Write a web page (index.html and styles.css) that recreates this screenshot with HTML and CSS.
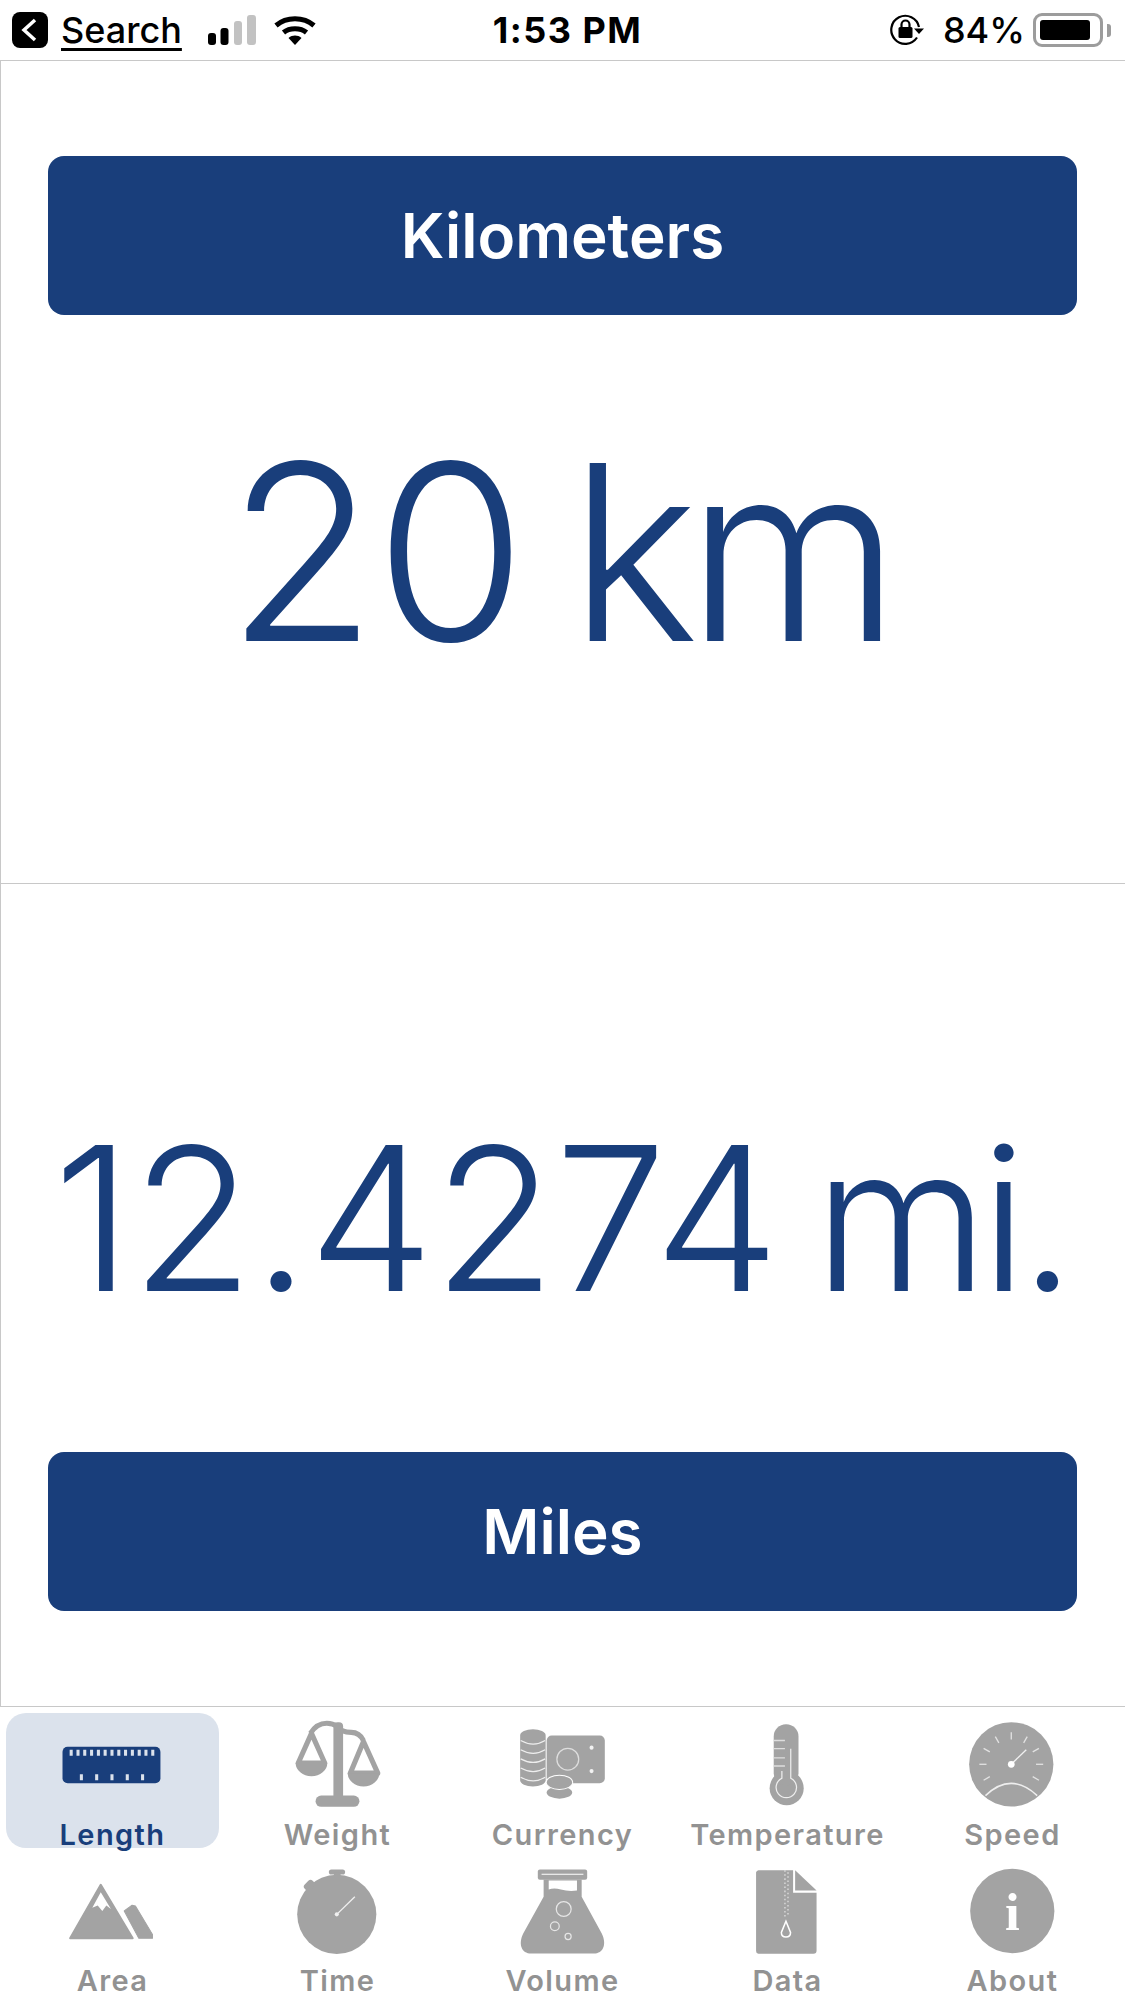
FILE: index.html
```html
<!DOCTYPE html>
<html lang="en">
<head>
    <meta charset="UTF-8">
    <meta name="viewport" content="width=device-width, initial-scale=1.0"/>
    <title>Length converter</title>
    <link rel="stylesheet" href="styles.css">
</head>
<body>
    <!--status bar-->
    <header class="status">
        <div class="status-left">
            <svg class="back" width="36" height="36" viewBox="0 0 36 36"><rect width="36" height="36" rx="8" fill="#000"/><path d="M23 8 12 18l11 10" fill="none" stroke="#fff" stroke-width="3.500"/></svg>
            <span class="search">Search</span>
            <svg class="signal" width="48" height="30" viewBox="0 0 48 30"><rect x="0" y="18" width="8" height="12" rx="3" fill="#000"/><rect x="12.500" y="13" width="8" height="17" rx="3" fill="#000"/><rect x="26" y="6" width="8" height="24" rx="3" fill="#c2c2c2"/><rect x="39" y="0" width="9" height="30" rx="3" fill="#c2c2c2"/></svg>
            <svg class="wifi" width="42" height="30" viewBox="0 0 42 30"><path d="M2 10.500C12.500 1.500 29.500 1.500 40 10.500" fill="none" stroke="#000" stroke-width="5"/><path d="M9.500 17.500C15.500 12.500 26.500 12.500 32.500 17.500" fill="none" stroke="#000" stroke-width="5"/><path d="M14.500 23 21 30l6.500-7C23.500 19.800 18.500 19.800 14.500 23z" fill="#000"/></svg>
        </div>
        <div class="clock">1:53 PM</div>
        <div class="status-right">
            <svg class="rotlock" width="34" height="32" viewBox="0 0 34 32"><path d="M27 23.500A14 14 0 1 1 29 13" fill="none" stroke="#000" stroke-width="2.200"/><path d="M24 14.500h10L29 20z" fill="#000"/><rect x="8.500" y="13" width="14" height="11" rx="1.500" fill="#000"/><path d="M11.500 13V10.500a4 4 0 0 1 8 0V13" fill="none" stroke="#000" stroke-width="2.200"/></svg>
            <span class="percent">84%</span>
            <div class="battery"><div class="battery-level"></div></div>
            <div class="battery-nub"></div>
        </div>
    </header>

    <main class="converter">
        <section class="panel panel-top">
            <div class="unit">Kilometers</div>
            <div class="value value-km">20 <span class="suffix">km</span></div>
        </section>
        <section class="panel panel-bottom">
            <div class="value value-mi">12.4274 <span class="suffix">mi.</span></div>
            <div class="unit">Miles</div>
        </section>
    </main>

    <!--tabs-->
    <nav class="tabs">
        <div class="tab active">
            <svg class="icon" viewBox="1 0 100 88">
                <rect x="1.500" y="26" width="96" height="36" rx="5" fill="#193e7b"/>
                <path d="M10 29v6M16.700 29v6M23.300 29v6M30 29v6M36.700 29v6M43.300 29v6M50 29v6M56.700 29v6M63.300 29v6M70 29v6M76.700 29v6M83.300 29v6M90 29v6M20 53v6M35 53v6M50 53v6M65 53v6M80 53v6" stroke="#dbe2ec" stroke-width="3"/>
            </svg>
            <span class="tab-label">Length</span>
        </div>
        <div class="tab">
            <svg class="icon" viewBox="1 0 100 88">
                <path d="M24 13Q30 3 40 3Q46 3 50 6Q54 12 64 12Q72 12 76 20" fill="none" stroke="#a3a3a3" stroke-width="5"/>
                <rect x="46.500" y="2" width="9.500" height="76" rx="4" fill="#a3a3a3"/>
                <rect x="29" y="74" width="43" height="11" rx="5.500" fill="#a3a3a3"/>
                <path d="M25 13 12 42H38zM76 21 63 52H90z" fill="none" stroke="#a3a3a3" stroke-width="5" stroke-linejoin="round"/>
                <path d="M9.500 42H40.500A15.500 13 0 0 1 9.500 42zM60.500 52H91.500A15.500 13 0 0 1 60.500 52z" fill="#a3a3a3"/>
            </svg>
            <span class="tab-label">Weight</span>
        </div>
        <div class="tab">
            <svg class="icon" viewBox="1 0 100 88">
                <rect x="35" y="15" width="57" height="47" rx="5" fill="#a3a3a3"/>
                <circle cx="55.700" cy="38.300" r="10.700" fill="none" stroke="#dedede" stroke-width="1.200"/>
                <circle cx="79" cy="27" r="2" fill="#f2f2f2"/>
                <circle cx="79" cy="50" r="2" fill="#f2f2f2"/>
                <path d="M9 15A12.500 6 0 0 1 34 15V59A12.500 6 0 0 1 9 59z" fill="#a3a3a3"/>
                <path d="M9.500 20Q22 27 33.500 20M9.500 29Q22 36 33.500 29M9.500 38Q22 45 33.500 38M9.500 47Q22 54 33.500 47M9.500 56Q22 63 33.500 56" fill="none" stroke="#eeeeee" stroke-width="1.200"/>
                <ellipse cx="47.500" cy="71" rx="12.500" ry="6" fill="#a3a3a3"/>
                <ellipse cx="47.500" cy="61" rx="13" ry="7" fill="#a3a3a3" stroke="#ffffff" stroke-width="1"/>
            </svg>
            <span class="tab-label">Currency</span>
        </div>
        <div class="tab">
            <svg class="icon" viewBox="1 0 100 88">
                <circle cx="49.700" cy="66.700" r="16.700" fill="#a3a3a3"/>
                <rect x="37" y="4" width="24.300" height="60" rx="12" fill="#a3a3a3"/>
                <path d="M37 20H48M37 28H48M37 37H48M37 45H48" stroke="#dedede" stroke-width="1.300"/>
                <path d="M53.700 28V57A10 10 0 1 1 45 57V50" fill="none" stroke="#eeeeee" stroke-width="1.200"/>
            </svg>
            <span class="tab-label">Temperature</span>
        </div>
        <div class="tab">
            <svg class="icon" viewBox="1 0 100 88">
                <circle cx="49.300" cy="43.300" r="41.300" fill="#a3a3a3"/>
                <g stroke="#e2e2e2" stroke-width="1.300">
                    <line x1="49.300" y1="12" x2="49.300" y2="19" transform="rotate(-120 49.300 43.300)"/>
                    <line x1="49.300" y1="12" x2="49.300" y2="19" transform="rotate(-90 49.300 43.300)"/>
                    <line x1="49.300" y1="12" x2="49.300" y2="19" transform="rotate(-60 49.300 43.300)"/>
                    <line x1="49.300" y1="12" x2="49.300" y2="19" transform="rotate(-30 49.300 43.300)"/>
                    <line x1="49.300" y1="12" x2="49.300" y2="19"/>
                    <line x1="49.300" y1="12" x2="49.300" y2="19" transform="rotate(30 49.300 43.300)"/>
                    <line x1="49.300" y1="12" x2="49.300" y2="19" transform="rotate(60 49.300 43.300)"/>
                    <line x1="49.300" y1="12" x2="49.300" y2="19" transform="rotate(90 49.300 43.300)"/>
                    <line x1="49.300" y1="12" x2="49.300" y2="19" transform="rotate(120 49.300 43.300)"/>
                </g>
                <path d="M49.300 43.300 64 29" stroke="#f0f0f0" stroke-width="1.300"/>
                <circle cx="49.300" cy="43.300" r="3.300" fill="#ffffff"/>
                <path d="M24 74Q49 50 74.700 74" fill="none" stroke="#eeeeee" stroke-width="1.500"/>
            </svg>
            <span class="tab-label">Speed</span>
        </div>
        <div class="tab">
            <svg class="icon" viewBox="1 0 100 88">
                <path d="M39 18.300 70.300 70.700H9z" fill="#a3a3a3" stroke="#a3a3a3" stroke-width="2" stroke-linejoin="round"/>
                <path d="M39 25.700 30.700 40.700 36 38.500 40.500 44 44.500 38.500 49 42z" fill="#ffffff"/>
                <path d="M62 44 69.700 38.300 73 39 89.700 67V70.700H76.300z" fill="#a3a3a3" stroke="#a3a3a3" stroke-width="1" stroke-linejoin="round"/>
            </svg>
            <span class="tab-label">Area</span>
        </div>
        <div class="tab">
            <svg class="icon" viewBox="1 0 100 88">
                <circle cx="49.800" cy="47.300" r="38.800" fill="#a3a3a3"/>
                <rect x="42" y="3.300" width="16" height="5" rx="2.500" fill="#a3a3a3"/>
                <rect x="47" y="6" width="6.500" height="5" fill="#a3a3a3"/>
                <rect x="17.500" y="15" width="11" height="8" rx="3" fill="#a3a3a3" transform="rotate(-45 23 19)" />
                <path d="M49.800 47.300 67.500 30" stroke="#f0f0f0" stroke-width="1.300"/>
                <circle cx="49.800" cy="47.300" r="2" fill="#f0f0f0"/>
            </svg>
            <span class="tab-label">Time</span>
        </div>
        <div class="tab">
            <svg class="icon" viewBox="1 0 100 88">
                <rect x="26.300" y="3.300" width="48.400" height="10" rx="2" fill="#a3a3a3"/>
                <path d="M30 8H71" stroke="#ffffff" stroke-width="1"/>
                <path d="M32 13V30L12 66C7 76 10 85.700 20 85.700H81C91 85.700 94 76 89 66L69.300 30V13z" fill="#a3a3a3"/>
                <path d="M37 14V23Q42 21 49 23T64.700 24V14z" fill="#ffffff"/>
                <g fill="none" stroke="#e6e6e6" stroke-width="1.200">
                    <circle cx="51.700" cy="42" r="7.300"/>
                    <circle cx="43" cy="59" r="4.300"/>
                    <circle cx="56" cy="69" r="3"/>
                </g>
            </svg>
            <span class="tab-label">Volume</span>
        </div>
        <div class="tab">
            <svg class="icon" viewBox="1 0 100 88">
                <path d="M22 4H56V26H79V83A3 3 0 0 1 76 86H22A3 3 0 0 1 19.700 83V6A3 3 0 0 1 22 4z" fill="#a3a3a3"/>
                <path d="M58 4 79 24H58z" fill="#a3a3a3"/>
                <path d="M48 4V50M51 6V50" stroke="#e4e4e4" stroke-width="1.200" stroke-dasharray="1.500 2.500"/>
                <path d="M49 54 44.500 65Q44.500 69.500 49 69.500Q53.500 69.500 53.500 65z" fill="#a3a3a3" stroke="#ffffff" stroke-width="1.500"/>
            </svg>
            <span class="tab-label">Data</span>
        </div>
        <div class="tab">
            <svg class="icon" viewBox="1 0 100 88">
                <circle cx="50.300" cy="44" r="41.300" fill="#a3a3a3"/>
                <text class="info-i" x="50.300" y="63" text-anchor="middle">i</text>
            </svg>
            <span class="tab-label">About</span>
        </div>
    </nav>
</body>
</html>
```

FILE: styles.css
```css
* {
  box-sizing: border-box;
}
body {
  margin: 0;
  width: 1125px;
  height: 2001px;
  overflow: hidden;
  background: #fff;
  font-family: Inter, "Liberation Sans", sans-serif;
}
.status {
  display: grid;
  grid-template-columns: 1fr auto 1fr;
  align-items: center;
  height: 61px;
  border-bottom: 1px solid #c8c8c8;
  color: #000;
}
.status-left, .status-right {
  display: flex;
  align-items: center;
}
.status-left {
  padding-left: 12px;
}
.search {
  margin-left: 13px;
  font-size: 36px;
  font-weight: 500;
  text-decoration: underline;
  text-underline-offset: 5px;
}
.signal {
  margin-left: 26px;
}
.wifi {
  margin-left: 18px;
}
.clock {
  margin-left: 10px;
  font-size: 36px;
  font-weight: 700;
  letter-spacing: 1.500px;
}
.status-right {
  justify-content: flex-end;
  padding-right: 14px;
}
.percent {
  margin-left: 19px;
  font-size: 36px;
  font-weight: 500;
}
.battery {
  margin-left: 8px;
  width: 70px;
  height: 34px;
  padding: 4px;
  border: 3px solid #9c9c9c;
  border-radius: 9px;
}
.battery-level {
  width: 50px;
  height: 100%;
  background: #000;
  border-radius: 3px;
}
.battery-nub {
  margin-left: 4px;
  width: 4px;
  height: 13px;
  background: #9c9c9c;
  border-radius: 0 3px 3px 0;
}
.converter {
  height: 1646px;
  border-left: 1px solid #c8c8c8;
  border-bottom: 1px solid #c8c8c8;
}
.panel {
  height: 822px;
  padding: 0 48px 0 47px;
}
.panel-top {
  padding-top: 95px;
  height: 823px;
  border-bottom: 1px solid #c8c8c8;
}
.unit {
  height: 159px;
  background: #193e7b;
  color: #fff;
  border-radius: 16px;
  font-size: 62px;
  font-weight: 600;
  line-height: 159px;
  text-align: center;
}
.value {
  color: #193e7b;
  font-weight: 300;
  text-align: center;
  white-space: nowrap;
}
.value-km {
  margin-top: 87px;
  padding-right: 10px;
  font-size: 245px;
  line-height: 300px;
  letter-spacing: -2px;
  word-spacing: -22px;
}
.value-km .suffix {
  letter-spacing: -12px;
}
.value-mi {
  margin-top: 214px;
  padding-right: 4px;
  height: 354px;
  font-size: 200px;
  line-height: 240px;
  letter-spacing: -1px;
  word-spacing: -20px;
}
.value-mi .suffix {
  letter-spacing: -8px;
}
.tabs {
  display: grid;
  grid-template-columns: repeat(5, 1fr);
  grid-auto-rows: 135px;
  row-gap: 11px;
  padding-top: 6px;
}
.tab {
  display: flex;
  flex-direction: column;
  align-items: center;
  margin: 0 6px;
  padding-top: 7px;
  border-radius: 20px;
}
.tab.active {
  background: #dbe2ec;
}
.icon {
  flex: none;
  width: 102px;
  height: 90px;
}
.tab-label {
  margin-top: 8px;
  font-size: 29px;
  font-weight: 600;
  line-height: 34px;
  letter-spacing: 1.400px;
  color: #929292;
  white-space: nowrap;
}
.active .tab-label {
  color: #193e7b;
}
.info-i {
  font-family: "Liberation Serif", serif;
  font-size: 52px;
  font-weight: 700;
  fill: #fff;
}
```
